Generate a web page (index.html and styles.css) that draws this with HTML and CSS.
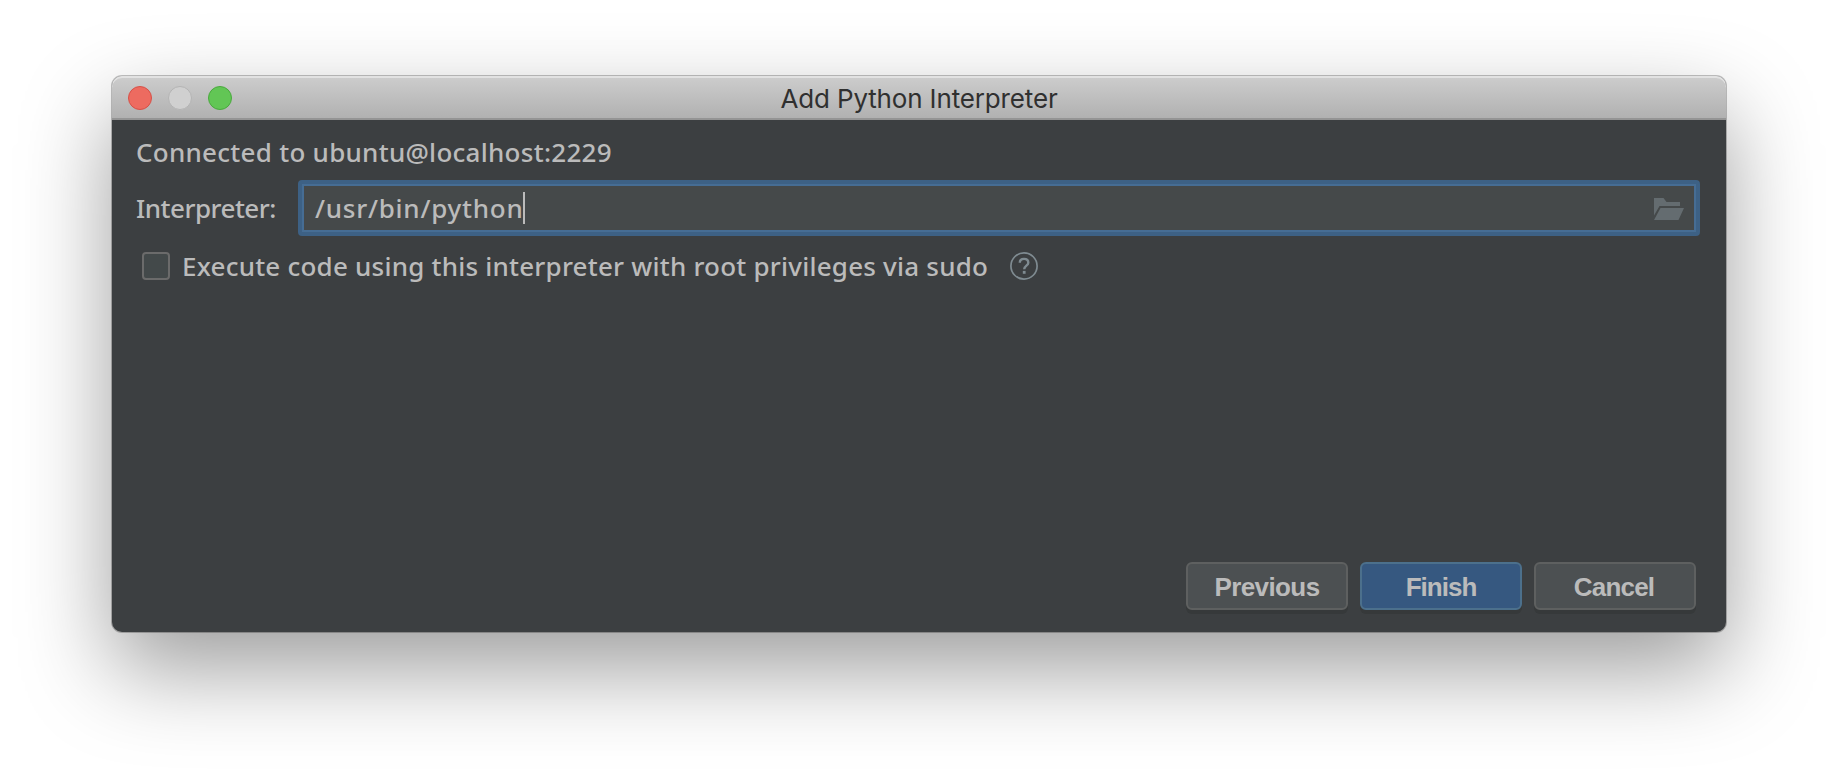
FILE: index.html
```html
<!DOCTYPE html>
<html lang="en">
<head>
<meta charset="utf-8">
<title>Add Python Interpreter</title>
<link rel="stylesheet" href="styles.css">
</head>
<body>
<main class="dialog">
  <header class="titlebar">
    <div class="lights"><i class="light close"></i><i class="light minimize"></i><i class="light expand"></i></div>
    <h1 class="title">Add Python Interpreter</h1>
  </header>
  <section class="content">
    <p class="status">Connected to ubuntu@localhost:2229</p>
    <div class="field-row">
      <label class="label">Interpreter:</label>
      <div class="field">
        <span class="value">/usr/bin/python</span><i class="caret"></i>
        <svg class="folder" width="30" height="22" viewBox="0 0 30 22"><path d="M0 0H9.5L12.5 4H26V8H5.500L0 17.500Z M6.500 10H30L24.500 22H0Z" fill="#646c70"/></svg>
      </div>
    </div>
    <div class="check-row">
      <i class="checkbox"></i>
      <span class="check-label">Execute code using this interpreter with root privileges via sudo</span>
      <svg class="help" width="28" height="28" viewBox="0 0 28 28" fill="none" stroke="#7f8b91"><circle cx="14" cy="14" r="13.1" stroke-width="1.7"/><path d="M9.800 10.800C9.800 8.300 11.500 6.900 14 6.900S18.300 8.400 18.300 10.700C18.300 13.500 14.200 13.800 14.200 17.200" stroke-width="2.400"/><path d="M14.200 18.900V21.800" stroke-width="2.800"/></svg>
    </div>
    <footer class="buttons">
      <button class="btn previous">Previous</button>
      <button class="btn primary">Finish</button>
      <button class="btn cancel">Cancel</button>
    </footer>
  </section>
</main>
</body>
</html>
```
FILE: styles.css
```css
* { box-sizing: border-box; }
body {
  margin: 0;
  height: 780px;
  padding: 76px 112px 0;
  overflow: hidden;
  background: #fff;
  color: #bbb;
  font: 500 26px/32px "Noto Sans", sans-serif;
}
.dialog {
  display: flex;
  flex-direction: column;
  height: 556px;
  border-radius: 10px;
  background: #3c3f41;
  box-shadow: 0 0 0 1px rgba(0,0,0,.24), 0 37px 90px rgba(0,0,0,.39);
}
.titlebar {
  display: grid;
  grid-template-columns: 1fr auto 1fr;
  align-items: center;
  height: 44px;
  padding: 2px 16px 0;
  border-radius: 10px 10px 0 0;
  border-bottom: 2px solid #949494;
  background: linear-gradient(#cdcdcd, #b1b1b1);
  box-shadow: inset 0 2px 0 #e2e2e2;
}
.lights { display: flex; gap: 16px; }
.light { width: 24px; height: 24px; border-radius: 50%; border: 1px solid; }
.close { background: #ed6b60; border-color: #d65148; }
.minimize { background: #d0d0d0; border-color: #b4b4b4; }
.expand { background: #62c655; border-color: #4aa93e; }
.title { margin: 0; padding-top: 2px; color: #303030; font: 400 26px/36px Inter, sans-serif; letter-spacing: -.15px; }
.content {
  flex: 1;
  display: flex;
  flex-direction: column;
  padding: 16px 26px 22px 24px;
}
.status { margin: 0; height: 32px; letter-spacing: .27px; }
.field-row { display: flex; align-items: center; height: 56px; margin: 12px 0 0; }
.label { width: 162px; letter-spacing: -.5px; }
.field {
  flex: 1;
  display: flex;
  align-items: center;
  height: 56px;
  padding: 0 12px 0 13px;
  border: 4px solid #3d6185;
  border-radius: 4px;
  background: #45494a;
  box-shadow: inset 0 0 0 2px #466d94;
}
.value { letter-spacing: .75px; }
.caret { width: 2px; height: 32px; background: #bbb; }
.folder { margin: 2px 0 0 auto; }
.check-row { display: flex; align-items: center; height: 32px; margin-top: 14px; padding-left: 6px; }
.checkbox { width: 28px; height: 28px; border: 2px solid #6b6b6b; border-radius: 4px; background: #43494a; }
.check-label { margin-left: 12px; letter-spacing: .22px; white-space: nowrap; }
.help { margin-left: 22px; }
.buttons { display: flex; justify-content: flex-end; gap: 12px; margin-top: auto; padding-right: 4px; }
.btn {
  width: 162px;
  height: 48px;
  margin: 0;
  padding: 1px 0 0;
  border: 2px solid #5e6060;
  border-radius: 6px;
  background: #4c5052;
  box-shadow: 0 4px 0 #36393a;
  color: #bbb;
  font: 700 26px/40px "Liberation Sans", sans-serif;
  letter-spacing: -1px;
}
.previous { letter-spacing: -.6px; }
.cancel { padding-right: 2px; letter-spacing: -.8px; }
.primary { border-color: #4c708c; background: #365880; }
```
